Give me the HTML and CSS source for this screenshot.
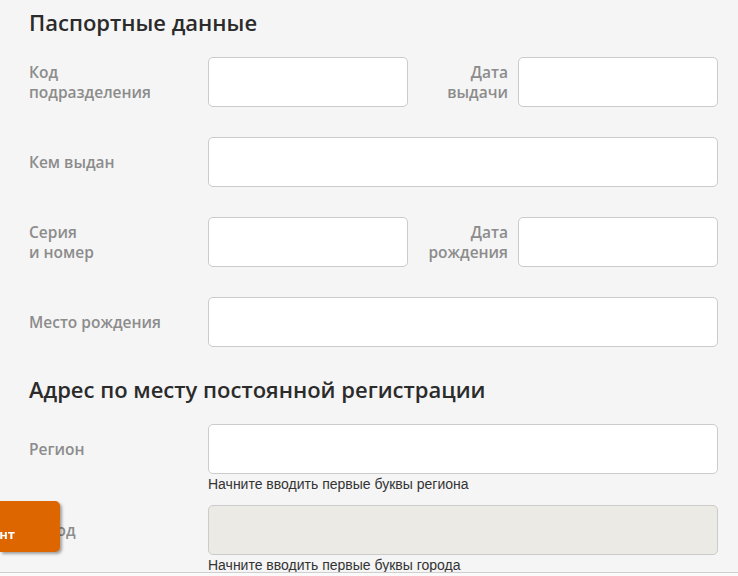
FILE: index.html
```html
<!DOCTYPE html>
<html lang="ru">
<head>
<meta charset="utf-8">
<link rel="stylesheet" href="styles.css">
</head>
<body>
<main class="page">
  <section class="section">
    <h2 class="title">Паспортные данные</h2>
    <div class="grid">
      <label class="label">Код<br>подразделения</label>
      <div class="input"></div>
      <label class="label label-right">Дата<br>выдачи</label>
      <div class="input"></div>

      <label class="label">Кем выдан</label>
      <div class="input wide"></div>

      <label class="label">Серия<br>и номер</label>
      <div class="input"></div>
      <label class="label label-right">Дата<br>рождения</label>
      <div class="input"></div>

      <label class="label">Место рождения</label>
      <div class="input wide"></div>
    </div>
  </section>
  <section class="section section-address">
    <h2 class="title">Адрес по месту постоянной регистрации</h2>
    <div class="grid grid-address">
      <label class="label">Регион</label>
      <div class="field">
        <div class="input wide-field"></div>
        <div class="hint">Начните вводить первые буквы региона</div>
      </div>
      <label class="label">Город</label>
      <div class="field">
        <div class="input wide-field disabled"></div>
        <div class="hint">Начните вводить первые буквы города</div>
      </div>
    </div>
  </section>
</main>
<button class="consult">Консультант</button>
<div class="footer-bar"></div>
</body>
</html>
```
FILE: styles.css
```css
html, body {
  margin: 0;
  padding: 0;
  background: #f5f5f5;
  height: 100%;
  overflow: hidden;
}
body {
  font-family: "Open Sans", "Noto Sans", sans-serif;
}
.page {
  padding: 6px 0 0 29px;
  width: 689px;
}
.title {
  margin: 0;
  font-size: 22px;
  font-weight: 600;
  line-height: 32px;
  color: #2b2b2b;
}
.grid {
  display: grid;
  grid-template-columns: 179px 200px 110px 200px;
  row-gap: 30px;
  margin-top: 19px;
  align-items: center;
}
.label {
  font-size: 15.5px;
  font-weight: 600;
  line-height: 20px;
  color: #8c8c8c;
  padding-right: 10px;
}
.label-right {
  text-align: right;
}
.input {
  height: 48px;
  background: #fff;
  border: 1px solid #cbcbcb;
  border-radius: 5px;
}
.wide {
  grid-column: 2 / 5;
}
.section-address {
  margin-top: 26px;
}
.grid-address {
  margin-top: 19px;
  row-gap: 12px;
  align-items: start;
}
.grid-address .label {
  line-height: 50px;
}
.field {
  grid-column: 2 / 5;
}
.disabled {
  background: #ebeae4;
}
.hint {
  font-family: "Liberation Sans", Arial, sans-serif;
  font-size: 14px;
  line-height: 17px;
  color: #333;
  margin-top: 2px;
}
.consult {
  position: fixed;
  left: 0;
  top: 501px;
  width: 60px;
  height: 51px;
  border: 0;
  border-radius: 0 5px 5px 0;
  background: #de6600;
  color: #fff;
  font-family: "Open Sans", sans-serif;
  font-weight: 700;
  font-size: 13px;
  display: flex;
  justify-content: flex-end;
  align-items: center;
  padding: 14px 45px 0 0;
  white-space: nowrap;
  overflow: hidden;
  box-shadow: 2px 2px 3px rgba(0,0,0,0.35);
}
.footer-bar {
  position: fixed;
  left: 0;
  right: 0;
  top: 572px;
  height: 4px;
  background: #fafafa;
  border-top: 1px solid #cfcfcf;
}
```
